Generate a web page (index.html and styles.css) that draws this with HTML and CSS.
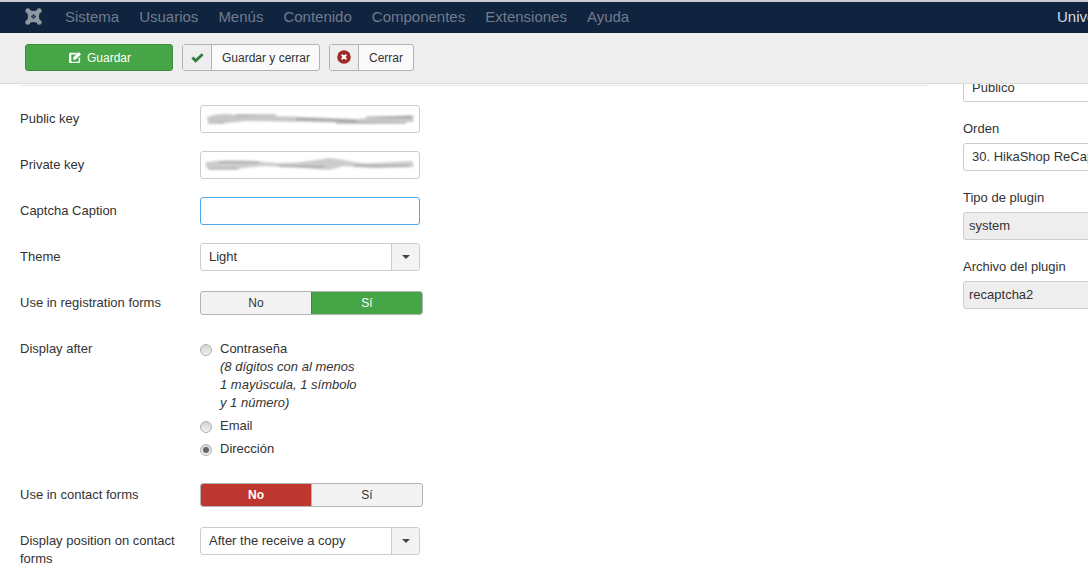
FILE: index.html
```html
<!DOCTYPE html>
<html lang="es">
<head>
<meta charset="utf-8">
<title>Plugin</title>
<link rel="stylesheet" href="styles.css">
</head>
<body>
<header class="navbar">
  <svg class="logo" viewBox="0 0 18 18" width="17" height="17"><path fill="#8f97a3" fill-rule="evenodd" d="M3 .3A2.700 2.700 0 0 1 5.600 2.400C7.500 3.400 10.500 3.400 12.400 2.400A2.700 2.700 0 1 1 15.600 5.600C14.600 7.500 14.600 10.500 15.600 12.400A2.700 2.700 0 1 1 12.400 15.600C10.500 14.600 7.500 14.600 5.600 15.600A2.700 2.700 0 1 1 2.400 12.400C3.400 10.500 3.400 7.500 2.400 5.600A2.700 2.700 0 0 1 3 .3zM9 6.300L7.800 7.500 9 8.700 10.200 7.500zM6.300 9L7.500 10.200 8.700 9 7.500 7.800zM9 9.300L7.800 10.500 9 11.700 10.200 10.500zM9.300 9L10.500 10.200 11.700 9 10.500 7.800z"/></svg>
  <nav class="menu"><span>Sistema</span><span>Usuarios</span><span>Menús</span><span>Contenido</span><span>Componentes</span><span>Extensiones</span><span>Ayuda</span></nav>
  <span class="site">Unive</span>
</header>
<div class="toolbar">
  <button class="btn save"><svg viewBox="0 0 14 14" width="13" height="13"><path fill="#fff" d="M1.500 2H9L7.300 3.700H2.500v7.800h7.800V8L12 6.300v5.200A1.500 1.500 0 0 1 10.500 13h-9A1.500 1.500 0 0 1 0 11.500v-8A1.500 1.500 0 0 1 1.500 2zM4.500 7l6-6 2.500 2.500-6 6H4.500z"/></svg>Guardar</button>
  <button class="btn split"><span class="ico"><svg viewBox="0 0 14 14" width="13" height="13"><path fill="none" stroke="#2f7d3c" stroke-width="3" d="M1.500 7l3.500 3.500 7.500-7"/></svg></span><span class="lbl">Guardar y cerrar</span></button>
  <button class="btn split"><span class="ico up1"><svg viewBox="0 0 14 14" width="14" height="14"><circle cx="7" cy="7" r="6.800" fill="#9e2a25"/><path stroke="#fff" stroke-width="2" d="M4.700 4.700l4.600 4.600M9.300 4.700l-4.600 4.600"/></svg></span><span class="lbl close">Cerrar</span></button>
</div>
<div class="content">
  <main class="form">
    <div class="rule"></div>
    <div class="row r-key"><label>Public key</label><div class="blur-in">
      <svg class="smear" viewBox="0 0 210 14" width="210" height="14"><path fill="#c8c8c8" d="M1 5C10 2 20 1 30 3L100 5 150 7 205 3 208 10 150 11 100 10 40 9 20 11 2 10z"/><path fill="none" stroke="#666" stroke-width=".7" d="M30 3H70M90 7L150 9M160 5H208M2 11H18M130 11H200"/></svg>
    </div></div>
    <div class="row r-key"><label>Private key</label><div class="blur-in">
      <svg class="smear two" viewBox="0 0 212 14" width="212" height="14"><path fill="#cccccc" d="M1 6C5 3 40 3 60 5 90 8 110 3 125 1 140 2 150 7 170 6L208 4 210 10 170 11 140 9 125 13 100 11 60 9 30 12 3 12z"/><path fill="none" stroke="#777" stroke-width=".7" d="M15 5H55M75 9L120 10M150 9H205M5 12H35"/></svg>
    </div></div>
    <div class="row r-key"><label>Captcha Caption</label><div class="blur-in focus"></div></div>
    <div class="row r-key"><label>Theme</label><div class="select"><span>Light</span><b><i></i></b></div></div>
    <div class="row r-toggle"><label>Use in registration forms</label><div class="toggle"><span>No</span><span class="green">Sí</span></div></div>
    <div class="row r-radio"><label>Display after</label>
      <div class="radios">
        <div class="radio"><i></i><div>Contraseña<em>(8 dígitos con al menos<br>1 mayúscula, 1 símbolo<br>y 1 número)</em></div></div>
        <div class="radio"><i></i><div>Email</div></div>
        <div class="radio"><i class="on"></i><div>Dirección</div></div>
      </div>
    </div>
    <div class="row r-toggle"><label>Use in contact forms</label><div class="toggle"><span class="red">No</span><span>Sí</span></div></div>
    <div class="row"><label class="wrap">Display position on contact forms</label><div class="select"><span>After the receive a copy</span><b><i></i></b></div></div>
  </main>
  <aside class="side">
    <div class="field clip"><div class="input up">Publico</div></div>
    <div class="field"><label>Orden</label><div class="input">30. HikaShop ReCaptcha</div></div>
    <div class="field"><label>Tipo de plugin</label><div class="input ro">system</div></div>
    <div class="field"><label>Archivo del plugin</label><div class="input ro">recaptcha2</div></div>
  </aside>
</div>
</body>
</html>
```
FILE: styles.css
```css
* { box-sizing: border-box; }
html, body { margin: 0; height: 575px; overflow: hidden; }
body { font-family: "Liberation Sans", Arial, sans-serif; font-size: 13px; color: #333; background: #fff; width: 1088px; }
.navbar { height: 33px; background: #10233f; border-top: 2px solid #c9ccd1; display: flex; align-items: center; padding: 0 0 2px 25px; color: #707c8d; font-size: 15px; }
.logo { flex: none; }
.menu { display: flex; gap: 20px; margin-left: 23px; flex: 1; }
.site { color: #d8dde4; width: 31px; overflow: hidden; white-space: nowrap; }
.toolbar { height: 51px; background: #eee; border-bottom: 1px solid #dcdcdc; display: flex; align-items: flex-start; gap: 9px; padding: 11px 0 0 25px; }
.btn { height: 27px; font: 12px "Liberation Sans", Arial, sans-serif; border-radius: 3px; padding: 0; display: flex; align-items: center; color: #333; }
.save { width: 148px; background: #46a546; color: #fff; border: 1px solid #3c8f3c; justify-content: center; gap: 5px; padding-left: 2px; }
.split { background: #fafafa; border: 1px solid #b3b3b3; }
.ico { width: 29px; height: 100%; background: #eee; border-right: 1px solid #b3b3b3; display: flex; align-items: center; justify-content: center; }
.ico.up1 { padding-bottom: 2px; }
.lbl { padding: 0 9px 0 10px; }
.lbl.close { padding: 0 10px 0 10px; }
.content { display: flex; height: 491px; overflow: hidden; }
.form { width: 908px; margin: 1px 35px 0 20px; flex: none; }
.rule { height: 1px; background: #e8e8e8; margin-bottom: 19px; }
.row { display: flex; }
.row label { width: 180px; flex: none; padding-top: 5px; line-height: 18px; }
.row label.wrap { width: 165px; margin-right: 15px; }
.r-key { margin-bottom: 18px; }
.r-key:nth-of-type(5) { margin-bottom: 20px; }
.r-toggle { margin-bottom: 20px; }
.row.r-toggle label { padding-top: 2px; }
.r-toggle label { line-height: 20px; }
.r-radio { margin-bottom: 25px; }
.blur-in { width: 220px; height: 28px; border: 1px solid #ccc; border-radius: 3px; background: #fff; position: relative; overflow: hidden; }
.blur-in.focus { border-color: #51a7e8; }
.smear { position: absolute; left: 5px; top: 6px; filter: blur(1px); }
.smear.two { left: 3px; top: 5px; }
.select { width: 220px; height: 28px; border: 1px solid #ccc; border-radius: 3px; display: flex; align-items: center; background: #fff; }
.select span { flex: 1; padding: 0 0 2px 8px; }
.select b { width: 28px; height: 100%; background: #f3f3f3; border-left: 1px solid #ccc; display: flex; align-items: center; justify-content: center; border-radius: 0 3px 3px 0; }
.select b i { border: 4px solid transparent; border-top-color: #444; border-bottom: 0; }
.toggle { width: 223px; height: 24px; display: flex; border: 1px solid #b3b3b3; border-radius: 3px; overflow: hidden; background: #f3f3f3; font-size: 12px; }
.toggle span { flex: 1; display: flex; align-items: center; justify-content: center; }
.toggle span + span { border-left: 1px solid #b3b3b3; }
.toggle .green { background: #46a546; color: #fff; border-color: #3c8f3c; }
.toggle .red { background: #bd362f; color: #fff; font-weight: 700; flex: none; width: 110px; }
.radios { display: flex; flex-direction: column; gap: 5px; padding-top: 5px; }
.radio { display: flex; gap: 8px; line-height: 18px; }
.radio i { width: 12px; height: 12px; margin-top: 4px; border: 1px solid #b0b0b0; border-radius: 50%; background: linear-gradient(#d4d4d4, #f0f0f0); flex: none; position: relative; }
.radio i.on::after { content: ""; position: absolute; inset: 2px; background: #666; border-radius: 50%; }
.radio em { display: block; }
.side { width: 200px; flex: none; }
.side .field { margin-bottom: 17px; width: 200px; }
.side label { display: block; line-height: 18px; height: 24px; padding-top: 1px; }
.input { height: 28px; border: 1px solid #ccc; border-radius: 3px; padding: 5px 8px; line-height: 16px; white-space: nowrap; overflow: hidden; }
.input.ro { background: #eee; padding-left: 5px; }
.side .clip { height: 18px; margin-bottom: 17px; overflow: hidden; }
.input.up { margin-top: -10px; }
```
